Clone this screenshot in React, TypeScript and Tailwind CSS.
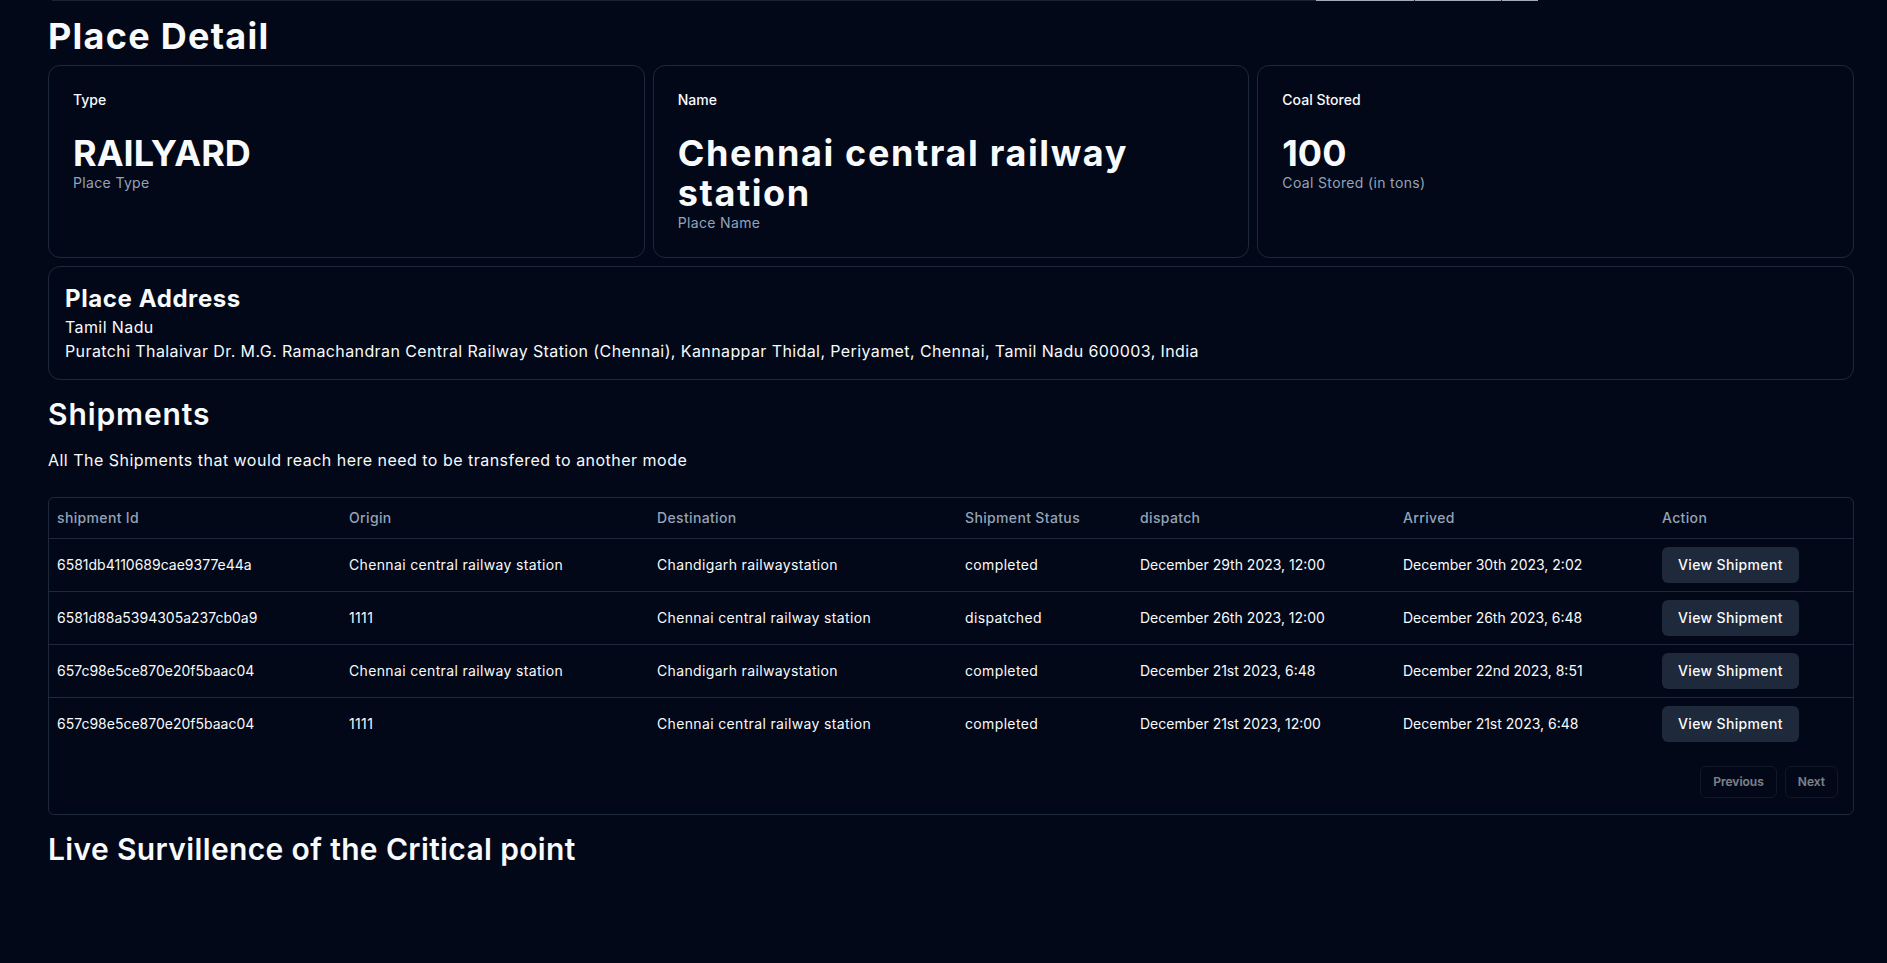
import React from 'react'

type Shipment = {
  id: string
  origin: string
  destination: string
  status: string
  dispatch: string
  arrived: string
}

const shipments: Shipment[] = [
  {
    id: '6581db4110689cae9377e44a',
    origin: 'Chennai central railway station',
    destination: 'Chandigarh railwaystation',
    status: 'completed',
    dispatch: 'December 29th 2023, 12:00',
    arrived: 'December 30th 2023, 2:02',
  },
  {
    id: '6581d88a5394305a237cb0a9',
    origin: '1111',
    destination: 'Chennai central railway station',
    status: 'dispatched',
    dispatch: 'December 26th 2023, 12:00',
    arrived: 'December 26th 2023, 6:48',
  },
  {
    id: '657c98e5ce870e20f5baac04',
    origin: 'Chennai central railway station',
    destination: 'Chandigarh railwaystation',
    status: 'completed',
    dispatch: 'December 21st 2023, 6:48',
    arrived: 'December 22nd 2023, 8:51',
  },
  {
    id: '657c98e5ce870e20f5baac04',
    origin: '1111',
    destination: 'Chennai central railway station',
    status: 'completed',
    dispatch: 'December 21st 2023, 12:00',
    arrived: 'December 21st 2023, 6:48',
  },
]

function StatCard({
  label,
  value,
  caption,
  wide,
}: {
  label: string
  value: string
  caption: string
  wide?: boolean
}) {
  return (
    <div className="rounded-xl border border-[#1e293b] p-6">
      <div className="text-sm font-medium leading-5">{label}</div>
      <div
        className={
          wide
            ? 'mt-[23px] text-4xl font-bold leading-10 tracking-[0.045em]'
            : 'mt-[23px] text-4xl font-bold leading-10'
        }
      >
        {value}
      </div>
      <p className="text-sm leading-5 tracking-wide text-[#94a3b8]">{caption}</p>
    </div>
  )
}

export default function App() {
  return (
    <div className="min-h-screen bg-[#020817] text-[#f8fafc] font-['Inter','Open_Sans',sans-serif]">
      {/* edge of the element above, scrolled off */}
      <div className="flex h-px pl-[52px]">
        <div className="w-[1264px] bg-[#1c2230]" />
        <div className="w-[98px] bg-[#a3aab6]" />
        <div className="w-px bg-[#2a3040]" />
        <div className="w-[86px] bg-[#a3aab6]" />
        <div className="w-px bg-[#2a3040]" />
        <div className="w-[36px] bg-[#a3aab6]" />
      </div>

      <div className="pl-12 pr-[33px]">
        <h1 className="mt-[15px] mb-[9px] text-4xl font-bold leading-10 tracking-[0.035em]">
          Place Detail
        </h1>

        <div className="grid grid-cols-3 gap-2">
          <StatCard label="Type" value="RAILYARD" caption="Place Type" />
          <StatCard
            label="Name"
            value="Chennai central railway station"
            caption="Place Name"
            wide
          />
          <StatCard
            label="Coal Stored"
            value="100"
            caption="Coal Stored (in tons)"
          />
        </div>

        <div className="mt-2 rounded-xl border border-[#1e293b] p-4">
          <h2 className="text-2xl font-bold leading-8 tracking-wide">
            Place Address
          </h2>
          <p className="text-base leading-6 tracking-wide">Tamil Nadu</p>
          <p className="text-base leading-6 tracking-wide">
            Puratchi Thalaivar Dr. M.G. Ramachandran Central Railway Station
            (Chennai), Kannappar Thidal, Periyamet, Chennai, Tamil Nadu 600003,
            India
          </p>
        </div>

        <h2 className="mt-4 text-3xl font-semibold leading-9 tracking-[0.03em]">
          Shipments
        </h2>
        <p className="mt-4 text-base leading-6 tracking-[0.03em]">
          All The Shipments that would reach here need to be transfered to
          another mode
        </p>

        <div className="mt-[25px] rounded-md border border-[#1e293b]">
          <table className="w-full table-fixed border-collapse text-sm">
            <colgroup>
              <col className="w-[292px]" />
              <col className="w-[308px]" />
              <col className="w-[308px]" />
              <col className="w-[175px]" />
              <col className="w-[263px]" />
              <col className="w-[259px]" />
              <col />
            </colgroup>
            <thead>
              <tr className="border-b border-[#1e293b]">
                {[
                  'shipment Id',
                  'Origin',
                  'Destination',
                  'Shipment Status',
                  'dispatch',
                  'Arrived',
                  'Action',
                ].map((h) => (
                  <th
                    key={h}
                    className="h-10 px-2 text-left align-middle font-medium tracking-wide text-[#94a3b8]"
                  >
                    {h}
                  </th>
                ))}
              </tr>
            </thead>
            <tbody>
              {shipments.map((s, i) => (
                <tr
                  key={i}
                  className={
                    i < shipments.length - 1 ? 'border-b border-[#1e293b]' : ''
                  }
                >
                  <td className="p-2 align-middle">{s.id}</td>
                  <td className="p-2 align-middle tracking-wide">{s.origin}</td>
                  <td className="p-2 align-middle tracking-wide">
                    {s.destination}
                  </td>
                  <td className="p-2 align-middle tracking-wide">{s.status}</td>
                  <td className="p-2 align-middle">{s.dispatch}</td>
                  <td className="p-2 align-middle">{s.arrived}</td>
                  <td className="p-2 align-middle">
                    <button className="h-9 rounded-md bg-[#1e293b] px-4 text-sm font-medium tracking-wide text-[#f8fafc]">
                      View Shipment
                    </button>
                  </td>
                </tr>
              ))}
            </tbody>
          </table>
          <div className="flex items-center justify-end gap-2 py-4 pr-[15px]">
            <button
              disabled
              className="h-8 rounded-md border border-[#1e293b] px-3 text-xs font-semibold opacity-50"
            >
              Previous
            </button>
            <button
              disabled
              className="h-8 rounded-md border border-[#1e293b] px-3 text-xs font-semibold opacity-50"
            >
              Next
            </button>
          </div>
        </div>

        <h2 className="mt-4 text-3xl font-semibold leading-9 tracking-[0.012em]">
          Live Survillence of the Critical point
        </h2>
      </div>
    </div>
  )
}
